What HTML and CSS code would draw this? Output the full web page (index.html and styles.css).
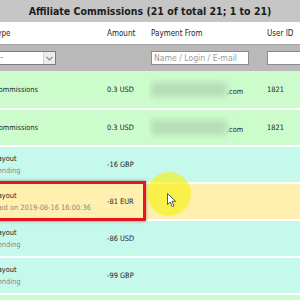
FILE: index.html
```html
<!DOCTYPE html>
<html lang="en">
<head>
    <meta charset="UTF-8">
    <meta name="viewport" content="width=device-width, initial-scale=1.0">
    <title>Affiliate Commissions</title>
    <link rel="stylesheet" href="styles.css">
</head>
<body>
    <div class="page">
        <div class="title">Affiliate Commissions (21 of total 21; 1 to 21)</div>
        <table class="grid">
            <colgroup>
                <col class="c-type">
                <col class="c-amount">
                <col class="c-from">
                <col class="c-user">
            </colgroup>
            <thead>
                <tr class="head">
                    <th>Type</th>
                    <th>Amount</th>
                    <th>Payment From</th>
                    <th>User ID</th>
                </tr>
                <tr class="filter">
                    <td>
                        <div class="select">
                            <span class="select-text">---</span>
                            <span class="select-arrow">
                                <svg width="7" height="5" viewBox="0 0 7 5"><path d="M0.5 0.8 L3.5 3.8 L6.5 0.8" fill="none" stroke="#8a8a8a" stroke-width="1.2"/></svg>
                            </span>
                        </div>
                    </td>
                    <td></td>
                    <td><input class="field field-from" type="text" placeholder="Name / Login / E-mail"></td>
                    <td><input class="field field-user" type="text"></td>
                </tr>
            </thead>
            <tbody>
                <tr class="commission first">
                    <td>Commissions</td>
                    <td>0.3 USD</td>
                    <td><span class="blur"></span>.com</td>
                    <td>1821</td>
                </tr>
                <tr class="commission">
                    <td>Commissions</td>
                    <td>0.3 USD</td>
                    <td><span class="blur"></span>.com</td>
                    <td>1821</td>
                </tr>
                <tr class="payout">
                    <td>Payout<div class="sub">Pending</div></td>
                    <td>-16 GBP</td>
                    <td></td>
                    <td></td>
                </tr>
                <tr class="paid">
                    <td>Payout<div class="sub">Paid on 2019-08-16 16:00:36</div></td>
                    <td>-81 EUR</td>
                    <td></td>
                    <td></td>
                </tr>
                <tr class="payout">
                    <td>Payout<div class="sub">Pending</div></td>
                    <td>-86 USD</td>
                    <td></td>
                    <td></td>
                </tr>
                <tr class="payout">
                    <td>Payout<div class="sub">Pending</div></td>
                    <td>-99 GBP</td>
                    <td></td>
                    <td></td>
                </tr>
                <tr class="commission">
                    <td>Commissions</td>
                    <td>0.3 USD</td>
                    <td><span class="blur"></span>.com</td>
                    <td>1821</td>
                </tr>
            </tbody>
        </table>

        <!-- annotation overlays -->
        <div class="mark"></div>
        <div class="spot"></div>
        <svg class="cursor" width="10" height="15" viewBox="0 0 10 15">
            <path d="M0.5 0.5 L0.5 11.5 L3.2 9 L5.2 13.6 L7 12.8 L5 8.3 L8.6 8.3 Z" fill="#ffffff" stroke="#555555" stroke-width="1" stroke-linejoin="round"/>
        </svg>
    </div>
</body>
</html>
```

FILE: styles.css
```css
body {
    margin: 0;
    padding: 0;
    background-color: #ccfccc;
    font-family: "DejaVu Sans Condensed", "DejaVu Sans", sans-serif;
    color: #222222;
}
.page {
    position: relative;
    width: 300px;
    height: 300px;
    overflow: hidden;
}
.title {
    height: 22px;
    line-height: 23px;
    background-color: #c6c6c6;
    text-align: center;
    font-weight: bold;
    font-size: 10.5px;
    color: #1c1c1c;
}
.grid {
    margin-left: -10px;
    width: 340px;
    table-layout: fixed;
    border-collapse: collapse;
}
.c-type { width: 115px; }
.c-amount { width: 44px; }
.c-from { width: 116px; }
.c-user { width: 65px; }
.grid th, .grid td {
    padding: 0 0 0 2px;
    text-align: left;
    white-space: nowrap;
    overflow: hidden;
    vertical-align: middle;
}
.grid th:first-child, .grid td:first-child {
    padding-left: 4px;
}
.head th {
    height: 22px;
    background-color: #ffffff;
    font-weight: normal;
    font-size: 8px;
    color: #1e1e1e;
}
.filter td {
    height: 26px;
    background-color: #b9b9b9;
    border-top: 1px solid #a4a4a4;
}
.select {
    display: flex;
    width: 62px;
    height: 14px;
    box-sizing: border-box;
    border: 1px solid #7c7c7c;
    background-color: #ffffff;
}
.select-text {
    flex: 1;
    font-size: 8px;
    line-height: 12px;
    color: #666666;
}
.select-arrow {
    width: 11px;
    display: flex;
    align-items: center;
    justify-content: center;
    background-color: #ececec;
    border-left: 1px solid #d0d0d0;
}
.field {
    display: block;
    height: 14px;
    box-sizing: border-box;
    margin: 0;
    padding: 0 2px;
    border: 1px solid #8c8c8c;
    background-color: #ffffff;
    font-family: inherit;
    font-size: 8.6px;
}
.field::placeholder {
    color: #9a9a9a;
}
.field-from { width: 98px; }
.field-user { width: 60px; }
.grid tbody td {
    height: 35px;
    border-bottom: 2px solid #ffffff;
    font-size: 7.4px;
    line-height: 11px;
}
.grid tbody tr.first td {
    height: 37px;
}
.commission td { background-color: #ccfccc; }
.payout td { background-color: #c4f9ec; }
.paid td { background-color: #fff0b0; }
.sub {
    color: #888888;
    margin-top: 1px;
}
.blur {
    display: inline-block;
    width: 76px;
    height: 15px;
    vertical-align: -3px;
    background-color: rgba(160, 185, 160, 0.45);
    filter: blur(3px);
}
.mark {
    position: absolute;
    left: -4px;
    top: 181px;
    width: 150px;
    height: 40px;
    box-sizing: border-box;
    border: 3px solid #e8161c;
    box-shadow: 0 0 3px rgba(0, 0, 0, 0.45);
}
.spot {
    position: absolute;
    left: 147px;
    top: 172px;
    width: 44px;
    height: 44px;
    border-radius: 50%;
    background-color: rgba(248, 240, 20, 0.65);
}
.cursor {
    position: absolute;
    left: 167px;
    top: 193px;
}
```
